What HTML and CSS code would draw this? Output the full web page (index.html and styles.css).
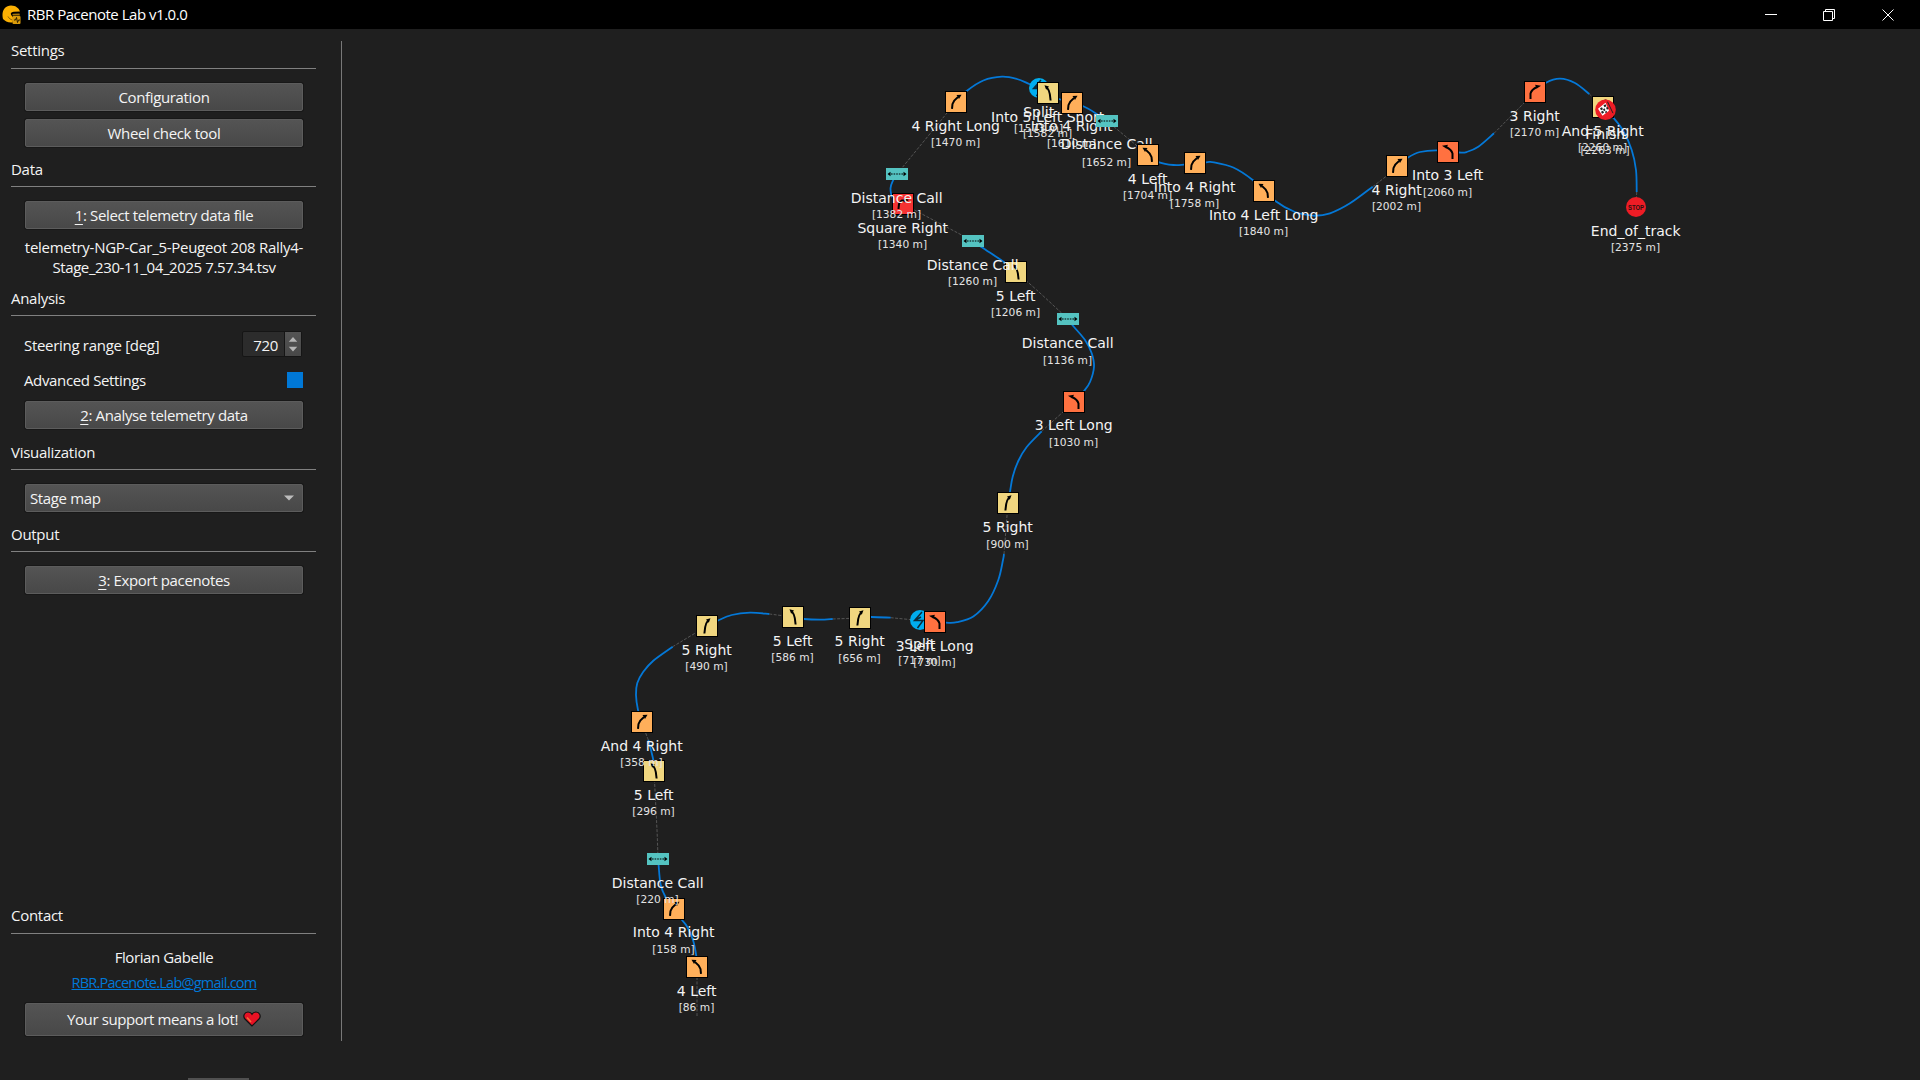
FILE: index.html
```html
<!DOCTYPE html>
<html lang="en">
<head>
<meta charset="utf-8">
<title>RBR Pacenote Lab v1.0.0</title>
<link rel="stylesheet" href="styles.css">
</head>
<body>
<header class="titlebar">
  <svg class="app-icon" width="20" height="20" viewBox="0 0 20 20">
    <path d="M1 14C-1 6 3 .5 9 .5c5 0 8 3 9 6l-6 .3c-3 .2-4 1.700-2.500 3.700l2 2.500-1 4.500C6 18 3 16 1 14z" fill="#fbb003"/>
    <path d="M17.500 8.500l-6 .3c-1.300.1-1.500.9-.6 1.700h7z" fill="#a87606"/>
    <path d="M6 11.500c1 2 2.500 3 4.500 3.500" stroke="#8a6206" stroke-width="1" fill="none"/>
    <rect x="10.500" y="11" width="8" height="8" rx="1" fill="#d99a0a"/>
    <path d="M12 15h1.500l1-2.500 1 5 1-2.500H18" stroke="#2a1e00" stroke-width="1" fill="none"/>
  </svg>
  <span class="title">RBR Pacenote Lab v1.0.0</span>
  <div class="window-buttons">
    <svg width="12" height="14" viewBox="0 0 12 14"><path d="M0 6.500h12" class="wb"/></svg>
    <svg width="12" height="14" viewBox="0 0 12 14"><path d="M.5 3.500h9v9h-9zM2.500 3.500v-2h9v9h-2" class="wb"/></svg>
    <svg width="12" height="14" viewBox="0 0 12 14"><path d="M.5 1.500l11 11M11.500 1.500l-11 11" class="wb"/></svg>
  </div>
</header>
<main class="workspace">
  <aside class="sidebar">
    <h2 class="raised">Settings</h2>
    <section class="group">
      <button>Configuration</button>
      <button>Wheel check tool</button>
    </section>
    <h2>Data</h2>
    <section class="group">
      <button><u>1</u>: Select telemetry data file</button>
      <p class="file"><span class="wide">telemetry-NGP-Car_5-Peugeot 208 Rally4-</span><br>Stage_230-11_04_2025 7.57.34.tsv</p>
    </section>
    <h2 class="after-file">Analysis</h2>
    <section class="group analysis">
      <div class="field"><span class="range">Steering range [deg]</span>
        <div class="spin"><span class="value">720</span>
          <svg class="steps" width="17" height="24" viewBox="0 0 17 24"><path d="M4 9.500L8.500 4.500 13 9.500zM4 15L8.500 20 13 15z" fill="#b4b4b4"/></svg>
        </div>
      </div>
      <div class="field advanced"><span>Advanced Settings</span><i class="check"></i></div>
      <button><u>2</u>: Analyse telemetry data</button>
    </section>
    <h2 class="tall">Visualization</h2>
    <section class="group">
      <button class="combo"><span>Stage map</span><svg width="10" height="6" viewBox="0 0 10 6"><path d="M0 .5h10L5 5.500z" fill="#bdbdbd"/></svg></button>
    </section>
    <h2>Output</h2>
    <section class="group">
      <button><u>3</u>: Export pacenotes</button>
    </section>
    <div class="spacer"></div>
    <h2 class="raised">Contact</h2>
    <section class="group contact">
      <p>Florian Gabelle</p>
      <a>RBR.Pacenote.Lab@gmail.com</a>
      <button class="support">Your support means a lot!
        <svg width="18" height="16" viewBox="0 0 18 16"><path d="M9 15L2 8C-.5 5 1.500 1 5 1c2 0 3.300 1 4 2.300C9.700 2 11 1 13 1c3.500 0 5.500 4 3 7z" fill="#e81224" stroke="#111" stroke-width="1.200"/><path d="M4 6.500L8 11" stroke="#f4703a" stroke-width="1.600"/></svg>
      </button>
    </section>
  </aside>
  <svg class="map" id="map" width="1578" height="1051" viewBox="342 29 1578 1051">
    <defs>
      <g id="turn5"><path class="arrow" d="M13.600 18.500L12.800 12Q12.300 8.500 10 5.500"/><path class="tip" d="M7.500 3.200L12 4.600 9.200 7.800z"/></g>
      <g id="turn4"><path class="arrow" d="M15 17.800L14.500 13Q13 9 9 6"/><path class="tip" d="M5.500 3.800L10.500 4 8 8z"/></g>
      <g id="turn3"><path class="arrow" d="M15.500 18V12.500Q14.500 8.500 9 6"/><path class="tip" d="M5 4.800L11 3.700 9.200 7.600z"/></g>
      <g id="square"><path class="arrow" d="M15.500 16L15 11Q14.500 8.500 12 7.500H8"/><path class="tip" d="M5 7L9.500 5v4.500z"/></g>
      <g id="distance"><rect width="22" height="12" y="5" fill="#54c3c1"/><path d="M5 11h12" stroke="#000" stroke-width="1.200" stroke-dasharray="1.600 1"/><path d="M1.500 11L4.500 8.800v4.400zM20.500 11L17.500 8.800v4.400z"/></g>
      <g id="split"><circle cx="11" cy="11" r="10" fill="#00adef"/><path d="M13 3L5.500 11.500H14L8.500 19M5.500 11.500L12 8" fill="none" stroke="#0b2a38" stroke-width="1.500"/></g>
      <g id="finish"><circle cx="11" cy="11" r="10.300" fill="#ee1c25"/><path d="M3.500 10L11 4l3.500 8L8 17z" fill="#fff"/><path d="M5.500 9.500l2-1 1 2-2 1zM9 6.500l2-1 1 2-2 1zM8.500 10.500l1.500-1 1 2-1.500 1zM11.500 9l1.500-1 1 2-1.500 1zM6.500 13l2-1 1 2-2 1zM10.500 13l1.500-1 .6 1.500-1.500 1z" fill="#222"/><path d="M13 3L18.500 14.500" stroke="#222" stroke-width="1"/></g>
      <g id="stop"><circle cx="11" cy="11" r="10" fill="#ee1c25"/><text class="stop-word" x="11" y="13.800" textLength="16" lengthAdjust="spacingAndGlyphs">STOP</text></g>
    </defs>
  </svg>
</main>
<div class="dock-edge"></div>
<script src="map.js"></script>
</body>
</html>
```
FILE: styles.css
```css
* { box-sizing: border-box; }
body {
  margin: 0; width: 1920px; height: 1080px; overflow: hidden; position: relative;
  background: #1f1f1f; color: #f4f4f4;
  font: 15px/22px "Open Sans", "Noto Sans", sans-serif;
  letter-spacing: -.36px;
}
.titlebar { height: 29px; background: #000; display: flex; align-items: center; padding: 0 26px 0 2px; }
.title { margin: -2px 0 0 5px; color: #fff; white-space: nowrap; letter-spacing: -.48px; }
.window-buttons { margin-left: auto; display: flex; gap: 46px; }
.window-buttons svg:last-child { margin-left: 1px; }
.wb { fill: none; stroke: #fff; stroke-width: 1; }
.workspace { display: flex; height: 1051px; }
.sidebar {
  width: 342px; height: 1051px; padding: 0 25px 44px 11px;
  display: flex; flex-direction: column; position: relative;
}
.sidebar::after { content: ""; position: absolute; right: 0; top: 12px; height: 1000px; width: 1px; background: #787878; }
h2 {
  margin: 0; font: inherit; width: 305px; height: 40px; padding-top: 11px;
  border-bottom: 1px solid #808080; flex: none; letter-spacing: -.28px;
}
h2.raised { padding-top: 10px; }
h2.tall { height: 41px; padding-top: 12px; }
h2.after-file { height: 39px; padding-top: 10px; }
.group { width: 305px; display: flex; flex-direction: column; gap: 8px; padding: 14px 13px 0 14px; }
button {
  height: 28px; padding: 0; border: 1px solid #5c5c5c; border-radius: 2px; color: #f4f4f4;
  background: linear-gradient(#545454, #484848); font: inherit; letter-spacing: inherit; box-shadow: 0 0 0 1px #181818;
}
u { text-underline-offset: 3px; text-decoration-thickness: 1px; }
.file { margin: 0 -10px; text-align: center; line-height: 20px; white-space: nowrap; letter-spacing: -.4px; }
.wide { letter-spacing: -.28px; }
.analysis { gap: 0; padding-top: 15px; }
.field { display: flex; align-items: center; justify-content: space-between; height: 26px; margin-left: -1px; }
.range { padding-top: 2px; letter-spacing: -.3px; }
.advanced { height: 16px; margin: 15px 0 13px -1px; }
.spin {
  width: 60px; height: 26px; display: flex; border: 1px solid #151515; border-radius: 2px;
  background: #2c2c2c; margin-right: 1px;
}
.value { flex: 1; text-align: right; padding-right: 6px; line-height: 26px; }
.steps { background: linear-gradient(#545454, #484848); border-left: 1px solid #151515; }
.check { width: 16px; height: 16px; background: #0078d7; }
.combo { display: flex; align-items: center; justify-content: space-between; padding: 0 8px 0 4px; }
.spacer { flex: 1; }
.contact { gap: 0; align-items: center; padding-top: 12px; }
.contact p { margin: 0; height: 26px; letter-spacing: -.4px; }
.contact a { height: 31px; color: #0078d7; text-decoration: underline; font-size: 14.5px; letter-spacing: -.76px; }
.support { width: 278px; height: 33px; display: flex; align-items: center; justify-content: center; gap: 5px; padding-bottom: 1px; letter-spacing: -.4px; }
.map { display: block; letter-spacing: 0; }
.route { fill: none; stroke: #0478d7; stroke-width: 1.800; }
.gap { fill: none; stroke: #555; stroke-width: 1; stroke-dasharray: 3 1.500; }
.arrow { fill: none; stroke: #000; stroke-width: 2; }
.tip { fill: #000; }
.name { font: 14px "DejaVu Sans", sans-serif; fill: #f4f4f4; text-anchor: middle; }
.metres { font: 10.670px "DejaVu Sans", sans-serif; fill: #e4e4e4; text-anchor: middle; }
.stop-word { font: bold 8px "Liberation Sans", sans-serif; fill: #2a1010; text-anchor: middle; }
.dock-edge { position: absolute; left: 188px; bottom: 0; width: 61px; height: 2px; background: #505050; }
```
FILE: map.js
```js
const NS = "http://www.w3.org/2000/svg";
const map = document.getElementById("map");

function add(tag, attrs, text) {
  const el = document.createElementNS(NS, tag);
  for (const key in attrs) el.setAttribute(key, attrs[key]);
  if (text) el.textContent = text;
  map.appendChild(el);
}

// Smooth curve through the points (Catmull-Rom converted to Béziers).
function curve(p) {
  let d = `M${p[0]}`;
  for (let i = 0; i < p.length - 1; i++) {
    const a = p[i - 1] || p[i], b = p[i], c = p[i + 1], e = p[i + 2] || c;
    d += `C${b[0] + (c[0] - a[0]) / 6},${b[1] + (c[1] - a[1]) / 6} ${c[0] - (e[0] - b[0]) / 6},${c[1] - (e[1] - b[1]) / 6} ${c}`;
  }
  return d;
}

const straights = [
  [[697, 1016], [697, 967]],
  [[658, 859], [657, 830], [654, 771]],
  [[648.3, 740], [645.7, 733], [642, 722]],
  [[672.7, 646.7], [707, 626]],
  [[769.3, 614], [793, 617]],
  [[832.7, 619], [860, 618]],
  [[890.7, 617.7], [920, 620.5]],
  [[1004, 554], [1008, 503]],
  [[1041.7, 431.3], [1074, 402]],
  [[1068, 319], [1036.7, 290], [1016, 272]],
  [[973, 241], [903, 204]],
  [[897, 174], [956, 102]],
  [[1107, 121], [1148, 155]],
  [[1372.7, 186.7], [1397, 168]],
  [[1494, 133.3], [1535, 92]],
  [[1589.3, 94], [1603, 107]],
  [[1636.7, 192], [1636, 207]]
];
const corners = [
  [[697, 967], [696.3, 956], [693, 940], [687.3, 927], [682, 920], [674, 909], [666, 898], [660.7, 885], [658.5, 864], [658, 859]],
  [[654, 771], [653.3, 760], [648.3, 740]],
  [[642, 722], [638, 710], [636, 695], [637.3, 683], [643.3, 671.7], [653.3, 660.7], [672.7, 646.7]],
  [[707, 626], [717.7, 620.7], [731.7, 615], [750, 612.7], [769.3, 614]],
  [[793, 617], [804, 619], [820, 619.7], [832.7, 619]],
  [[860, 618], [871, 617], [890.7, 617.7]],
  [[920, 621], [946, 622.7], [957, 622.2], [973.3, 616.5], [988.3, 601], [998.3, 580], [1003, 560], [1004, 554]],
  [[1008, 503], [1010, 491.7], [1012.7, 476.7], [1018.3, 461], [1026.7, 447], [1041.7, 431.3]],
  [[1074, 402], [1084, 391], [1090, 382], [1094, 366.7], [1091.7, 353.3], [1085, 340], [1072.3, 325], [1068, 319]],
  [[1016, 272], [1005, 262.7], [981.7, 247.3], [973, 241]],
  [[903, 204], [893, 198], [890.5, 188.3], [893.3, 180], [897, 174]],
  [[956, 102], [966.7, 91], [983.3, 80.5], [1002, 76.7], [1017, 79], [1029.3, 84], [1039, 88], [1059, 99], [1082.7, 106], [1098.3, 115], [1107, 121]],
  [[1148, 155], [1159.3, 162.3], [1173.3, 165], [1184, 164.7], [1206, 162.3], [1214, 162.3], [1233.3, 167.5], [1252.7, 180], [1275, 200.7], [1295, 212], [1313.3, 215.7], [1330, 213.3], [1350, 203.3], [1372.7, 186.7]],
  [[1397, 166], [1407.7, 157.7], [1420, 152], [1437.3, 150.3], [1459.3, 152.5], [1466.7, 152], [1478.3, 146.7], [1494, 133.3]],
  [[1535, 92], [1546, 82.7], [1560, 78.7], [1575, 83], [1589.3, 94]],
  [[1603, 107], [1613.3, 117.7], [1623.3, 131], [1631.7, 150], [1636, 170], [1636.7, 192]]
];
straights.forEach(p => add("path", { class: "gap", d: curve(p) }));
corners.forEach(p => add("path", { class: "route", d: curve(p) }));

const tint = { turn5: "#f0d67f", turn4: "#ffaf5a", turn3: "#ff7140", square: "#f53232" };

// [x, y, icon, name, metres, mirrored, name offset, metres offset]
const notes = [
  [697, 967, "turn4", "4 Left", 86],
  [674, 909, "turn4", "Into 4 Right", 158, 1, 28],
  [658, 859, "distance", "Distance Call", 220],
  [654, 771, "turn5", "5 Left", 296],
  [642, 722, "turn4", "And 4 Right", 358, 1],
  [707, 626, "turn5", "5 Right", 490, 1],
  [793, 617, "turn5", "5 Left", 586],
  [860, 618, "turn5", "5 Right", 656, 1, 28],
  [920, 620, "split", "Split", 717],
  [935, 622, "turn3", "3 Left Long", 730],
  [1008, 503, "turn5", "5 Right", 900, 1, 29, 45],
  [1074, 402, "turn3", "3 Left Long", 1030, 0, 28],
  [1068, 319, "distance", "Distance Call", 1136, 0, 29, 45],
  [1016, 272, "turn5", "5 Left", 1206],
  [973, 241, "distance", "Distance Call", 1260],
  [903, 204, "square", "Square Right", 1340, 1],
  [897, 174, "distance", "Distance Call", 1382],
  [956, 102, "turn4", "4 Right Long", 1470, 1],
  [1039, 88, "split", "Split", 1573],
  [1048, 93, "turn5", "Into 5 Left Short", 1582],
  [1072, 103, "turn4", "Into 4 Right", 1610, 1, 28],
  [1107, 121, "distance", "Distance Call", 1652, 0, 28, 45],
  [1148, 155, "turn4", "4 Left", 1704],
  [1195, 163, "turn4", "Into 4 Right", 1758, 1],
  [1264, 191, "turn4", "Into 4 Left Long", 1840],
  [1397, 166, "turn4", "4 Right", 2002, 1],
  [1448, 152, "turn3", "Into 3 Left", 2060, 0, 28],
  [1535, 92, "turn3", "3 Right", 2170, 1],
  [1603, 107, "turn5", "And 5 Right", 2260, 1],
  [1605.5, 109.7, "finish", "Finish", 2263],
  [1636, 207, "stop", "End_of_track", 2375]
];
notes.forEach(([x, y, icon, name, metres, mirrored, nameDy = 29, metresDy = 44]) => {
  if (tint[icon]) add("rect", { x: x - 10.5, y: y - 10.5, width: 21, height: 21, fill: tint[icon], stroke: "#000" });
  const at = mirrored ? `translate(${x + 11} ${y - 11}) scale(-1 1)` : `translate(${x - 11} ${y - 11})`;
  add("use", { href: "#" + icon, transform: at });
  add("text", { class: "name", x: x - 0.3, y: y + nameDy }, name);
  add("text", { class: "metres", x: x - 0.5, y: y + metresDy }, `[${metres} m]`);
});
```
